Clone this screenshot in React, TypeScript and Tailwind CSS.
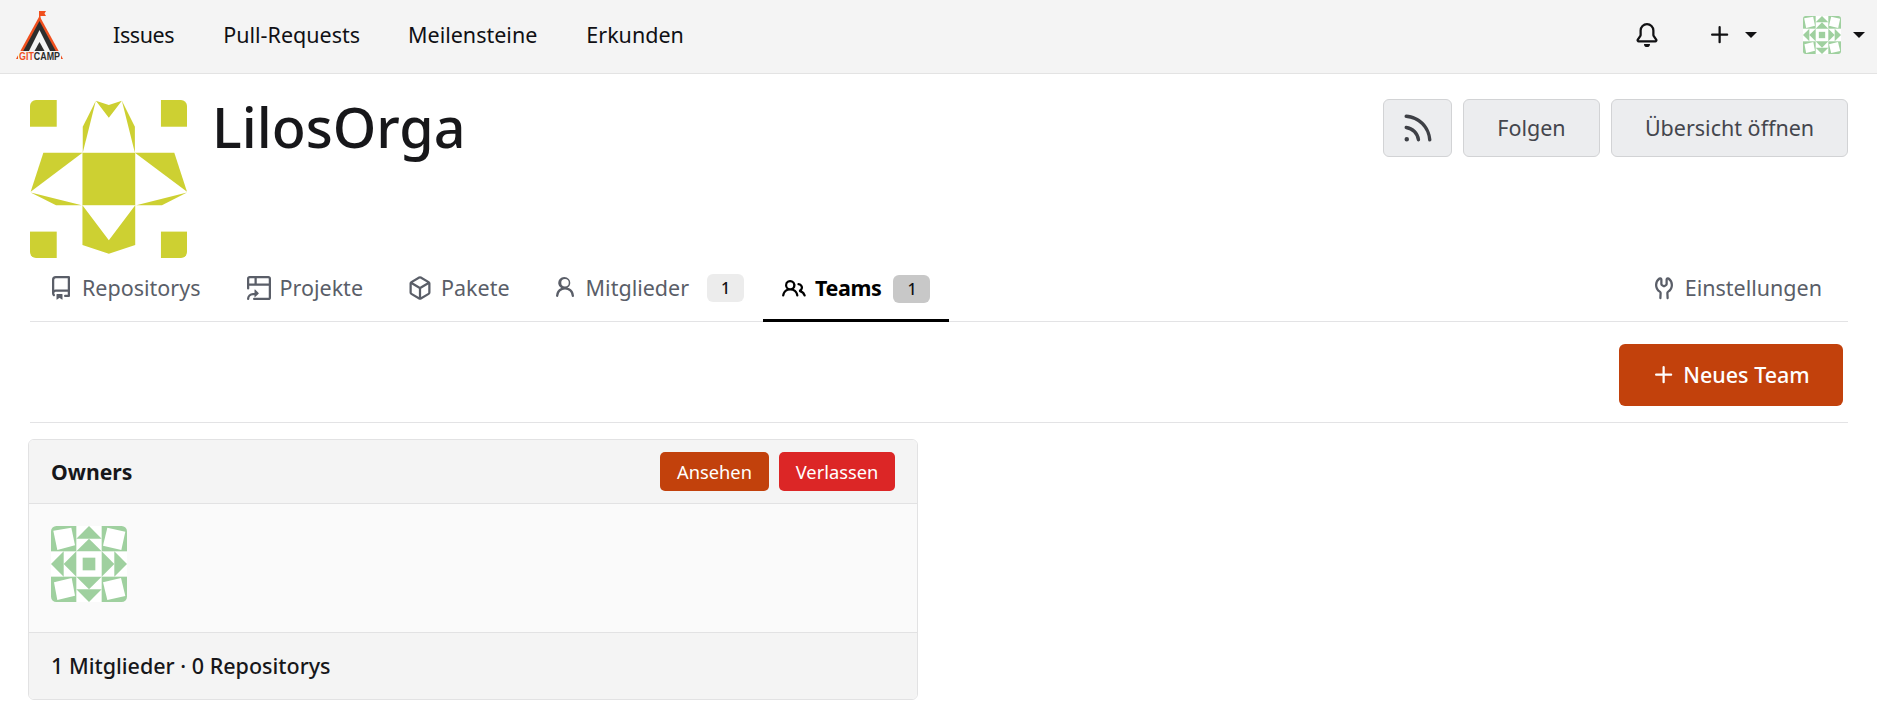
import React from "react";

const P = {
  bell: "M8 16a2 2 0 0 0 1.985-1.75c.017-.137-.097-.25-.235-.25h-3.5c-.138 0-.252.113-.235.25A2 2 0 0 0 8 16ZM3 5a5 5 0 0 1 10 0v2.947c0 .05.015.098.042.139l1.703 2.555A1.519 1.519 0 0 1 13.482 13H2.518a1.516 1.516 0 0 1-1.263-2.36l1.703-2.554A.255.255 0 0 0 3 7.947Zm5-3.5A3.5 3.5 0 0 0 4.5 5v2.947c0 .346-.102.683-.294.97l-1.703 2.556a.017.017 0 0 0-.003.01l.001.006c0 .002.002.004.004.006l.006.004.007.001h10.964l.007-.001.006-.004.004-.006.001-.007a.017.017 0 0 0-.003-.01l-1.703-2.554a1.745 1.745 0 0 1-.294-.97V5A3.5 3.5 0 0 0 8 1.5Z",
  plus: "M7.75 2a.75.75 0 0 1 .75.75V7h4.25a.75.75 0 0 1 0 1.5H8.5v4.25a.75.75 0 0 1-1.5 0V8.5H2.75a.75.75 0 0 1 0-1.5H7V2.75A.75.75 0 0 1 7.75 2Z",
  rss: "M2.002 2.725a.75.75 0 0 1 .797-.699C8.79 2.42 13.58 7.21 13.974 13.201a.75.75 0 0 1-1.497.098 10.502 10.502 0 0 0-9.776-9.776.747.747 0 0 1-.7-.798ZM2.84 7.05h-.002a7.002 7.002 0 0 1 6.113 6.111.75.75 0 0 1-1.49.178 5.503 5.503 0 0 0-4.8-4.8.75.75 0 0 1 .179-1.489ZM2 13a1 1 0 1 1 2 0 1 1 0 0 1-2 0Z",
  repo: "M2 2.5A2.5 2.5 0 0 1 4.5 0h8.75a.75.75 0 0 1 .75.75v12.5a.75.75 0 0 1-.75.75h-2.5a.75.75 0 0 1 0-1.5h1.75v-2h-8a1 1 0 0 0-.714 1.7.75.75 0 1 1-1.072 1.05A2.495 2.495 0 0 1 2 11.5Zm10.5-1h-8a1 1 0 0 0-1 1v6.708A2.486 2.486 0 0 1 4.5 9h8ZM5 12.25a.25.25 0 0 1 .25-.25h3.5a.25.25 0 0 1 .25.25v3.25a.25.25 0 0 1-.4.2l-1.45-1.087a.249.249 0 0 0-.3 0L5.4 15.7a.25.25 0 0 1-.4-.2Z",
  project: "M0 1.75C0 .784.784 0 1.75 0h12.5C15.216 0 16 .784 16 1.75v12.5A1.75 1.75 0 0 1 14.25 16h-9.5a.75.75 0 0 1 0-1.5h9.5a.25.25 0 0 0 .25-.25V6.5h-13v1.75a.75.75 0 0 1-1.5 0ZM6.5 5h8V1.75a.25.25 0 0 0-.25-.25H6.5Zm-5 0H5V1.5H1.75a.25.25 0 0 0-.25.25ZM5 9.25a.25.25 0 0 1 .427-.177l2.324 2.323a.25.25 0 0 1 0 .354l-2.324 2.323A.25.25 0 0 1 5 13.896V12.75H4a2.5 2.5 0 0 0-2.5 2.5.75.75 0 0 1-1.5 0A4 4 0 0 1 4 11.25h1Z",
  pkg: "m8.878.392 5.25 3.045c.54.314.872.89.872 1.514v6.098a1.75 1.75 0 0 1-.872 1.514l-5.25 3.045a1.75 1.75 0 0 1-1.756 0l-5.25-3.045A1.75 1.75 0 0 1 1 11.049V4.951c0-.624.332-1.201.872-1.514L7.122.392a1.75 1.75 0 0 1 1.756 0ZM7.875 1.69l-4.63 2.685L8 7.133l4.755-2.758-4.63-2.685a.248.248 0 0 0-.25 0ZM2.5 5.677v5.372c0 .09.047.171.125.216l4.625 2.683V8.432Zm6.25 8.271 4.625-2.683a.25.25 0 0 0 .125-.216V5.677L8.75 8.432Z",
  person: "M10.561 8.073a6.005 6.005 0 0 1 3.432 5.142.75.75 0 1 1-1.498.07 4.5 4.5 0 0 0-8.99 0 .75.75 0 0 1-1.498-.07 6.004 6.004 0 0 1 3.431-5.142 3.999 3.999 0 1 1 4.123 0ZM10.5 4.5a2.5 2.5 0 1 0-5 0 2.5 2.5 0 0 0 5 0Z",
  people: "M2 5.5a3.5 3.5 0 1 1 5.898 2.549 5.508 5.508 0 0 1 3.034 4.084.75.75 0 1 1-1.482.235 4 4 0 0 0-7.9 0 .75.75 0 0 1-1.482-.236A5.507 5.507 0 0 1 3.102 8.05 3.493 3.493 0 0 1 2 5.5ZM11 4a3.001 3.001 0 0 1 2.22 5.018 5.01 5.01 0 0 1 2.56 3.012.749.749 0 0 1-.885.954.752.752 0 0 1-.549-.514 3.507 3.507 0 0 0-2.522-2.372.75.75 0 0 1-.574-.73v-.352a.75.75 0 0 1 .416-.672A1.5 1.5 0 0 0 11 5.5.75.75 0 0 1 11 4Zm-5.5-.5a2 2 0 1 0-.001 3.999A2 2 0 0 0 5.5 3.5Z",
  tools: "M5.433 2.304A4.492 4.492 0 0 0 3.5 6c0 1.598.832 3.002 2.09 3.802.518.328.929.923.902 1.64v.008l-.164 3.337a.75.75 0 1 1-1.498-.073l.163-3.33c.002-.085-.05-.216-.207-.316A5.996 5.996 0 0 1 2 6a5.993 5.993 0 0 1 2.567-4.92 1.482 1.482 0 0 1 1.673-.04c.462.296.76.827.76 1.423v2.82c0 .082.041.16.11.206l.75.51a.25.25 0 0 0 .28 0l.75-.51A.249.249 0 0 0 9 5.282V2.463c0-.596.298-1.127.76-1.423a1.482 1.482 0 0 1 1.673.04A5.993 5.993 0 0 1 14 6a5.996 5.996 0 0 1-2.786 5.068c-.157.1-.209.23-.207.315l.163 3.33a.752.752 0 0 1-1.094.714.75.75 0 0 1-.404-.64l-.164-3.345c-.027-.717.384-1.312.902-1.64A4.495 4.495 0 0 0 12.5 6a4.492 4.492 0 0 0-1.933-3.696c-.024.017-.067.067-.067.16v2.818a1.75 1.75 0 0 1-.767 1.448l-.75.51a1.75 1.75 0 0 1-1.966 0l-.75-.51A1.75 1.75 0 0 1 5.5 5.282V2.463c0-.092-.043-.142-.067-.159Z",
};

function Oct({ d, className }: { d: string; className: string }) {
  return (
    <svg viewBox="0 0 16 16" fill="currentColor" className={className}>
      <path d={d} />
    </svg>
  );
}

function UserAvatar({ className, id }: { className: string; id: string }) {
  const g = "#9fd09f";
  return (
    <svg viewBox="0 0 228 228" className={className}>
      <defs>
        <clipPath id={id}><rect width="228" height="228" rx="16" /></clipPath>
      </defs>
      <g clipPath={`url(#${id})`}>
        <rect width="228" height="228" fill="#fff" />
        <rect width="76" height="76" fill={g} />
        <rect x="152" width="76" height="76" fill={g} />
        <rect y="152" width="76" height="76" fill={g} />
        <rect x="152" y="152" width="76" height="76" fill={g} />
        <polygon fill="#fff" points="7,14 61,5 72,58 19,72" />
        <polygon fill="#fff" points="169,5 223,17 211,72 156,59" />
        <polygon fill="#fff" points="9,169 62,156 72,209 19,222" />
        <polygon fill="#fff" points="156,169 210,156 223,210 169,222" />
        <polygon fill={g} points="114,0 152,38 76,38" />
        <polygon fill={g} points="114,38 152,76 76,76" />
        <polygon fill={g} points="76,152 152,152 114,190" />
        <polygon fill={g} points="76,190 152,190 114,228" />
        <polygon fill={g} points="0,114 38,76 38,152" />
        <polygon fill={g} points="38,114 76,76 76,152" />
        <polygon fill={g} points="228,114 190,76 190,152" />
        <polygon fill={g} points="190,114 152,76 152,152" />
        <rect x="95" y="95" width="38" height="38" fill={g} />
      </g>
    </svg>
  );
}

function OrgAvatar({ className }: { className: string }) {
  const c = "#cdd032";
  return (
    <svg viewBox="90 60 470 473" className={className}>
      <defs>
        <clipPath id="oa"><rect x="90" y="60" width="470" height="473" rx="18" /></clipPath>
      </defs>
      <g clipPath="url(#oa)" fill={c}>
        <rect x="90" y="60" width="80" height="80" />
        <rect x="482" y="60" width="78" height="80" />
        <rect x="90" y="454" width="80" height="79" />
        <rect x="482" y="454" width="78" height="79" />
        <rect x="247" y="218" width="158" height="157" />
        <polygon points="287,62 248,140 248,218" />
        <polygon points="365,62 404,140 404,218" />
        <polygon points="287,62 326,75 365,62 326,113" />
        <polygon points="130,218 247,218 92,335" />
        <polygon points="92,337 245,375 168,375" />
        <polygon points="404,218 522,218 560,335" />
        <polygon points="560,337 408,375 485,375" />
        <polygon points="247,375 326,480 405,375 405,494 326,520 247,494" />
      </g>
    </svg>
  );
}

function Logo() {
  return (
    <svg viewBox="0 0 49 50" className="w-[49px] h-[50px] shrink-0 -mt-[2px]">
      <polygon points="24,0 24,8 25.5,8 25.5,5 31,5 29.5,2.5 31,0" fill="#f0501e" />
      <polygon points="24.5,5 48,48 1,48" fill="#f0501e" />
      <polygon points="24.5,10 44,46 5,46" fill="#2d2d2d" />
      <polygon points="24.5,19 35,40 14,40" fill="#f4f4f4" />
      <polygon points="24.5,31 29.5,40 19.5,40" fill="#2d2d2d" />
      <rect x="3" y="40" width="43" height="10" fill="#f4f4f4" />
      <text x="24.5" y="48.5" textAnchor="middle" fontSize="10" fontWeight="700" fontFamily="'Liberation Sans', sans-serif" textLength="41" lengthAdjust="spacingAndGlyphs">
        <tspan fill="#f0501e">GIT</tspan><tspan fill="#2d2d2d">CAMP</tspan>
      </text>
    </svg>
  );
}

function Caret() {
  return <span className="inline-block w-0 h-0 border-x-[6px] border-x-transparent border-t-[6px] border-t-[#111113]" />;
}

export default function App() {
  return (
    <div className="min-h-[717px] bg-white text-[#101014] font-['Noto_Sans',sans-serif] overflow-hidden">
      <header className="h-[74px] bg-[#f4f4f4] border-b border-[#e3e3e3] flex items-center pl-[15px] pr-[12px]">
        <Logo />
        <nav className="flex items-center gap-[49px] ml-[49px] text-[21.5px] -mt-[2px]">
          <span className="tracking-[-0.4px]">Issues</span>
          <span>Pull-Requests</span>
          <span className="-ml-px">Meilensteine</span>
          <span>Erkunden</span>
        </nav>
        <div className="ml-auto flex items-center pb-[3px]">
          <Oct d={P.bell} className="w-[24px] h-[24px] text-[#111113]" />
          <Oct d={P.plus} className="w-[24px] h-[24px] ml-[49px] text-[#111113]" />
          <span className="ml-[13px] flex"><Caret /></span>
          <UserAvatar id="ua1" className="w-[38px] h-[38px] ml-[46px]" />
          <span className="ml-[12px] flex"><Caret /></span>
        </div>
      </header>

      <main className="pl-[30px] pr-[29px] pt-[26px]">
        <section className="flex items-start">
          <OrgAvatar className="w-[157px] h-[158px] shrink-0" />
          <h1 className="ml-[25px] text-[55.6px] leading-[54px] font-medium text-[#17171a]">LilosOrga</h1>
          <div className="ml-auto -mt-px flex gap-[11px] text-[21.5px] text-[#44464d]">
            <button className="w-[69px] h-[58px] rounded-[6px] bg-[#ecedef] border border-[#d2d3d5] flex items-center justify-center">
              <Oct d={P.rss} className="w-[36px] h-[36px] text-[#3e4046]" />
            </button>
            <button className="w-[137px] h-[58px] rounded-[6px] bg-[#ecedef] border border-[#d2d3d5]">Folgen</button>
            <button className="w-[237px] h-[58px] rounded-[6px] bg-[#ecedef] border border-[#d2d3d5]">Übersicht öffnen</button>
          </div>
        </section>

        <div className="h-[64px] border-b border-[#e3e3e5] flex items-stretch text-[21.5px] text-[#5a5e68]">
          <div className="flex items-center gap-[9px] px-[19px] pb-[3px]"><Oct d={P.repo} className="w-[24px] h-[24px]" /><span>Repositorys</span></div>
          <div className="flex items-center gap-[9px] px-[19px] pb-[3px] ml-[8px]"><Oct d={P.project} className="w-[24px] h-[24px]" /><span>Projekte</span></div>
          <div className="flex items-center gap-[9px] px-[19px] pb-[3px] ml-[7px]"><Oct d={P.pkg} className="w-[24px] h-[24px]" /><span>Pakete</span></div>
          <div className="flex items-center gap-[9px] px-[19px] pb-[3px] ml-[5px]">
            <Oct d={P.person} className="w-[24px] h-[24px]" /><span>Mitglieder</span>
            <span className="ml-[9px] w-[37px] h-[28px] rounded-[6px] bg-[#ececec] text-[#101014] text-[16px] font-medium flex items-center justify-center">1</span>
          </div>
          <div className="flex items-center gap-[9px] px-[19px] border-b-[3px] border-black -mb-px text-black font-bold">
            <Oct d={P.people} className="w-[24px] h-[24px]" /><span className="tracking-[-0.4px]">Teams</span>
            <span className="ml-[3px] w-[37px] h-[28px] rounded-[6px] bg-[#c8c8c8] text-[#101014] text-[16px] font-medium flex items-center justify-center">1</span>
          </div>
          <div className="ml-auto pr-[26px] pb-[3px] flex items-center gap-[9px]"><Oct d={P.tools} className="w-[24px] h-[24px]" /><span>Einstellungen</span></div>
        </div>

        <div className="h-[101px] border-b border-[#e3e3e5] flex justify-end pt-[22px] pr-[5px]">
          <button className="w-[224px] h-[62px] rounded-[6px] bg-[#c2410c] text-white text-[21.5px] font-medium flex items-center justify-center gap-[7px]">
            <Oct d={P.plus} className="w-[24px] h-[24px]" />Neues Team
          </button>
        </div>

        <section className="mt-[16px] -ml-[2px] w-[890px] rounded-[6px] border border-[#e2e2e3] overflow-hidden">
          <div className="h-[64px] bg-[#f4f4f4] border-b border-[#e2e2e3] flex items-center pl-[22px] pr-[22px]">
            <h3 className="text-[21.2px] font-bold text-[#17171a]">Owners</h3>
            <div className="ml-auto flex gap-[10px] text-white text-[18.3px]">
              <button className="w-[109px] h-[39px] rounded-[5px] bg-[#c2410c]">Ansehen</button>
              <button className="w-[116px] h-[39px] rounded-[5px] bg-[#dc2626]">Verlassen</button>
            </div>
          </div>
          <div className="h-[128px] bg-[#fafafa] pl-[22px] pt-[22px]">
            <UserAvatar id="ua2" className="w-[76px] h-[76px]" />
          </div>
          <div className="h-[67px] bg-[#f4f4f4] border-t border-[#e2e2e3] flex items-center pl-[22px] text-[21.5px] font-medium text-[#17171a]">
            1 Mitglieder · 0 Repositorys
          </div>
        </section>
      </main>
    </div>
  );
}
